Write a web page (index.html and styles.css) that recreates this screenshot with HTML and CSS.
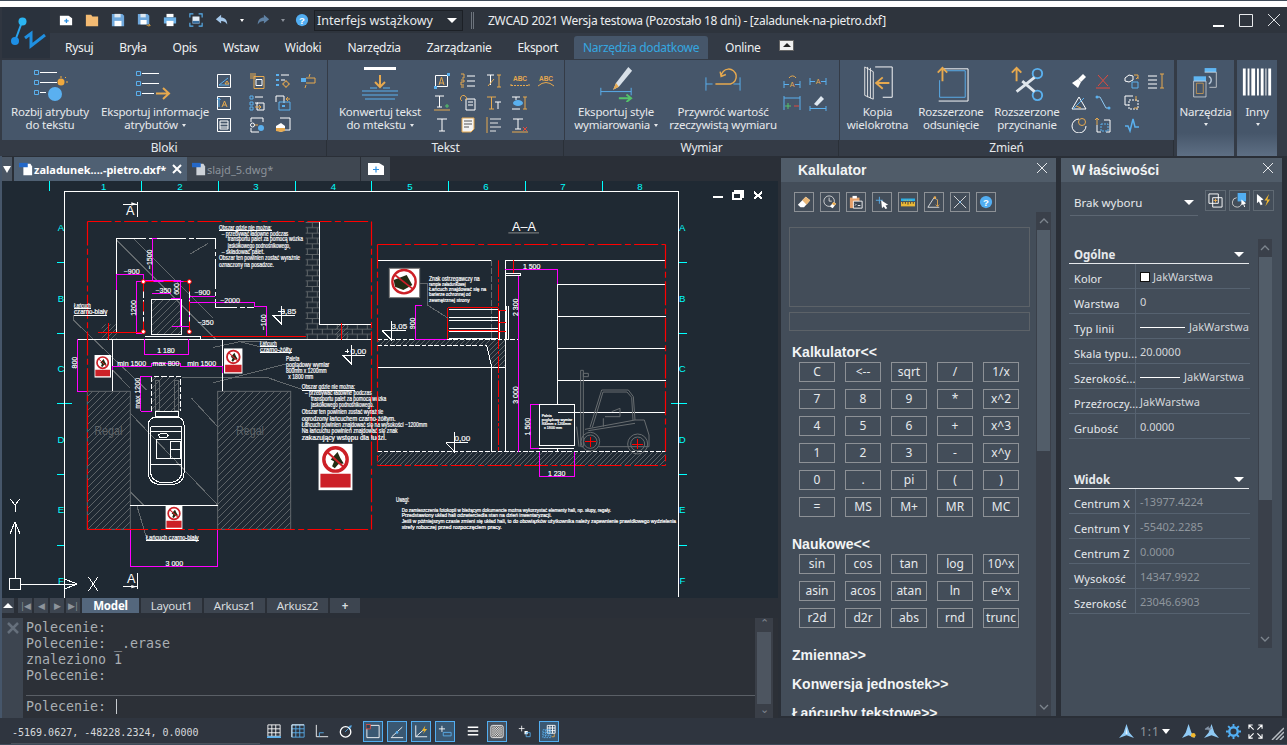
FILE: index.html
```html
<!DOCTYPE html>
<html lang="pl">
<head>
<meta charset="utf-8">
<title>ZWCAD 2021</title>
<link rel="stylesheet" href="styles.css">
</head>
<body>
<div class="app">
  <div class="strip"></div>
  <header class="head">
    <div class="logo">
      <svg width="48" height="50" viewBox="0 7 48 50"><path d="M20 22 13 41" stroke="#2aa5ee" stroke-width="2"/><circle cx="20.5" cy="21.5" r="4" fill="#2bb5f2"/><circle cx="13" cy="41" r="4" fill="#1d8fe6"/><path d="M23 38 29 33.500V46L43 35" fill="none" stroke="#1f8fe0" stroke-width="3"/></svg>
    </div>
    <div class="headmain">
      <div class="titlebar">
        <svg class="q" viewBox="0 0 16 16"><path d="M1 3h10l4 3v8H1z" fill="#fff"/><path d="M6 9h5M8.500 6.500v5" stroke="#2c8fe0" stroke-width="1.500"/></svg>
        <svg class="q" viewBox="0 0 16 16"><path d="M1 2h6l1.500 2H15v11H1z" fill="#f4bb73"/></svg>
        <svg class="q" viewBox="0 0 16 16"><path d="M1 1h12l2 2v12H1z" fill="#6fa8dc"/><path d="M4 1h7v4H4z" fill="#dfe8f0"/><path d="M4 9h8v6H4z" fill="#fff"/></svg>
        <svg class="q" viewBox="0 0 16 16"><path d="M1 1h11l2 2v10H1z" fill="#6fa8dc"/><path d="M4 1h6v4H4z" fill="#dfe8f0"/><path d="M4 8h7v5H4z" fill="#fff"/><path d="M11 14h4m-1.500-1.500 1.500 1.500-1.500 1.500" stroke="#eda93e" fill="none"/></svg>
        <svg class="q" viewBox="0 0 16 16"><path d="M4 1h8v4H4z" fill="#fff"/><path d="M1 5h14v7H1z" fill="#6fb3e8"/><path d="M4 9h8v6H4z" fill="#fff"/></svg>
        <svg class="q" viewBox="0 0 16 16"><path d="M1 5V1h4M11 1h4v4M15 11v4h-4M5 15H1v-4" fill="none" stroke="#59b0ee" stroke-width="1.300"/><path d="M4 4h8v8H4z" fill="#e5eef6"/><path d="M4 9h8v3H4z" fill="#3a6f9f"/></svg>
        <svg class="q" viewBox="0 0 16 16"><path d="M7 2 1 7l6 5V9c3 0 5 1 7 4 0-5-3-8-7-8z" fill="#a5c8ea"/></svg>
        <span class="tri small"></span>
        <svg class="q" viewBox="0 0 16 16"><path d="M9 2l6 5-6 5V9c-3 0-5 1-7 4 0-5 3-8 7-8z" fill="#5f81a3"/></svg>
        <span class="tri small dimtri"></span>
        <svg class="q" viewBox="0 0 16 16"><circle cx="8" cy="8" r="7" fill="#52aef2"/><text x="8" y="12" class="qm">?</text></svg>
        <div class="combo"><span>Interfejs wstążkowy</span><i class="tri"></i></div>
        <span class="sep"></span>
        <span class="title">ZWCAD 2021 Wersja testowa (Pozostało 18 dni) - [zaladunek-na-pietro.dxf]</span>
        <div class="win">
          <svg width="13" height="13" viewBox="0 0 13 13"><path d="M1 12h11" stroke="#fff" stroke-width="2"/></svg>
          <svg width="14" height="13" viewBox="0 0 14 13"><path d="M.5.500h13v12H.5z" fill="none" stroke="#e8eaec"/></svg>
          <svg width="14" height="14" viewBox="0 0 14 14"><path d="M1 1l12 12M13 1 1 13" stroke="#dfe2e5"/></svg>
        </div>
      </div>
      <nav class="menu">
        <a>Rysuj</a><a>Bryła</a><a>Opis</a><a>Wstaw</a><a>Widoki</a><a>Narzędzia</a><a>Zarządzanie</a><a>Eksport</a><a class="on">Narzędzia dodatkowe</a><a>Online</a>
        <button class="collapse"><i></i></button>
      </nav>
    </div>
  </header>

  <section class="ribbon">
    <div class="rpanel p1">
      <div class="rbody">
        <div class="big w1">
          <svg class="bi" width="50" height="36" viewBox="0 0 50 36"><g fill="none" stroke="#5ab0ee"><path d="M9.500 4.500h4v4h-4zM9.500 14.500h4v4h-4zM9.500 24.500h4v4h-4z"/></g><path d="M15 6.500h17M15 16.500h17M15 26.500h6" stroke="#fff"/><circle cx="30" cy="28" r="7" fill="#5ab0f0"/><circle cx="36" cy="16" r="3.500" fill="#f0a93e"/><path d="M36 10v2M41 16h2M40 12l1-1" stroke="#f0a93e"/></svg>
          <span>Rozbij atrybuty<br>do tekstu</span>
        </div>
        <div class="big w2">
          <svg class="bi" width="50" height="36" viewBox="0 0 50 36"><g fill="none" stroke="#5ab0ee"><path d="M6.500 5.500h4v4h-4zM6.500 15.500h4v4h-4zM6.500 25.500h4v4h-4z"/></g><path d="M12 7.500h17M12 17.500h17M12 27.500h12" stroke="#fff"/><path d="M26 27.500h12M33 22l6 5.500-6 5.500" fill="none" stroke="#e6a94f" stroke-width="2"/></svg>
          <span>Eksportuj informacje<br>atrybutów <b class="dd"></b></span>
        </div>
        <div class="smalls cb">
          <svg class="s" viewBox="0 0 16 16"><path d="M1.500 1.500h13v13h-13z" fill="none" stroke="#fff"/><path d="M3 12 12 5M3 12h10" stroke="#5ab0ee"/><path d="M9 11l2-3 2 3z" fill="none" stroke="#e6a94f"/></svg>
          <svg class="s" viewBox="0 0 16 16"><path d="M1 1h6M1 3h6M1 5h6" stroke="#e6a94f"/><path d="M5 3.500h10v12H5z" fill="none" stroke="#e6a94f"/><path d="M7 6.500h6v6H7z" fill="none" stroke="#fff"/></svg>
          <svg class="s" viewBox="0 0 16 16"><path d="M1 2h3M1 7h3M1 12h3" stroke="#5ab0ee" stroke-width="2"/><path d="M6 2h8M6 7h4" stroke="#fff"/><circle cx="11" cy="11" r="2.500" fill="none" stroke="#e6a94f"/><path d="M11 7v1M11 14v1M7 11h1M14 11h1" stroke="#e6a94f"/></svg>
          <svg class="s" viewBox="0 0 16 16"><path d="M1 5h5v4H1z" fill="#5ab0ee"/><path d="M6 5h9v5H6M10 1l-1 3M6 12l-1 3" fill="none" stroke="#e6a94f"/></svg>
          <svg class="s" viewBox="0 0 16 16"><path d="M1.500 1.500h13v13h-13z" fill="none" stroke="#fff"/><path d="M3 12V4M1.500 5 3 3l1.500 2" fill="none" stroke="#5ab0ee"/><path d="M6 12l2.500-6 2.500 6M7 10h3" fill="none" stroke="#e6a94f"/></svg>
          <svg class="s" viewBox="0 0 16 16"><path d="M1 1h3v3H1zM1 7h3v3H1zM1 12h3v3H1z" fill="none" stroke="#5ab0ee"/><path d="M6 2h8M6 8h3" stroke="#fff"/><path d="M8 8h7v7H8z" fill="none" stroke="#fff"/><path d="M6 12h6m-2-2 2 2-2 2" fill="none" stroke="#e6a94f"/></svg>
          <svg class="s" viewBox="0 0 16 16"><path d="M1 1h8v7" fill="none" stroke="#fff"/><path d="M1 1v6" stroke="#fff"/><path d="M4 7h11v8H4z" fill="none" stroke="#5ab0ee"/><path d="M15 4h-4m2-2-2 2 2 2" fill="none" stroke="#e6a94f"/><path d="M7 10h3v2H7z" fill="#5ab0ee"/></svg>
          <span class="s"></span>
          <svg class="s" viewBox="0 0 16 16"><path d="M1.500 1.500h13v13h-13z" fill="none" stroke="#fff"/><path d="M4 4h8v8H4zM4 7h8M4 10h8" fill="none" stroke="#fff"/></svg>
          <svg class="s" viewBox="0 0 16 16"><path d="M2 5V1h12v4M2 11v4h8" fill="none" stroke="#fff"/><circle cx="3.500" cy="8" r="2" fill="none" stroke="#fff"/><path d="M6 8h3" stroke="#e6a94f"/><circle cx="12" cy="11" r="3" fill="#5ab0ee"/></svg>
          <svg class="s" viewBox="0 0 16 16"><path d="M5 1h10v12H9" fill="none" stroke="#fff"/><path d="M1 9l5-3 4 3v4l-4 2-5-2z" fill="#fff"/><path d="M1 11h9v3l-4 1-5-1z" fill="#e6a94f"/></svg>
          <span class="s"></span>
        </div>
      </div>
      <div class="rlabel">Bloki</div>
    </div>
    <div class="rpanel p2">
      <div class="rbody">
        <div class="big w3">
          <svg class="bi" width="50" height="36" viewBox="0 0 50 36"><path d="M9 1h32v3H9z" fill="#fff"/><path d="M25 9v12M20 16l5 5 5-5" fill="none" stroke="#e6a94f" stroke-width="2"/><path d="M15 22h7M28 22h7M7 25h36M7 29h36M10 33h30" stroke="#5ab0ee"/></svg>
          <span>Konwertuj tekst<br>do mtekstu <b class="dd"></b></span>
        </div>
        <div class="smalls c5">
          <svg class="s" viewBox="0 0 16 16"><path d="M1.500 2.500h12v11h-12z" fill="none" stroke="#fff"/><path d="M5 12l2.500-8L10 12M5.500 10h4" fill="none" stroke="#e6a94f"/><path d="M13 0h3v3h-3zM0 13h3v3H0z" fill="#5ab0ee"/></svg>
          <svg class="s" viewBox="0 0 16 16"><path d="M1 1h3v4H2M1 7h3v2H1v3h3M1 14h3" fill="none" stroke="#e6a94f"/><path d="M7 3h8M7 8h8M7 13h8" stroke="#fff"/></svg>
          <svg class="s" viewBox="0 0 16 16"><path d="M1 2h7M4.500 2v10" stroke="#fff"/><path d="M2 13 8 6" stroke="#e6a94f"/><path d="M11 2h4M13 2v12M11 14h4" stroke="#e6a94f"/></svg>
          <svg class="s w" viewBox="0 0 20 16"><text x="10" y="8" class="abc">ABC</text><path d="M1 11v3M19 11v3M1 12.500h18" stroke="#e6a94f" stroke-dasharray="2 1"/></svg>
          <svg class="s w" viewBox="0 0 20 16"><text x="10" y="8" class="abc">ABC</text><path d="M2 13Q10 6 18 13" fill="none" stroke="#e6a94f"/></svg>
          <svg class="s" viewBox="0 0 16 16"><path d="M1 1h9M5.500 1v11M3 12h5" stroke="#fff"/><path d="M0 15h16" stroke="#e6a94f"/><path d="M11 11h4M13 9v4" stroke="#54c36a"/></svg>
          <svg class="s" viewBox="0 0 16 16"><path d="M6 4h9v11H6z" fill="none" stroke="#fff"/><path d="M8 7h5M8 10h5" stroke="#fff"/><path d="M6 5a3 3 0 1 0-4 1" fill="none" stroke="#e6a94f"/></svg>
          <svg class="s" viewBox="0 0 16 16"><path d="M1 2h9M5.500 2v12M3 14h5" stroke="#e6a94f"/><path d="M9 7h6M12 7v7" stroke="#fff"/></svg>
          <svg class="s" viewBox="0 0 16 16"><path d="M0 2h8M4 2v3M0 14h8" stroke="#fff"/><path d="M11 2h4M13 2v12M11 14h4" stroke="#e6a94f"/><ellipse cx="6" cy="8" rx="5" ry="3" fill="#5ab0ee"/></svg>
          <span class="s"></span>
          <svg class="s" viewBox="0 0 16 16"><path d="M3 2h10M8 2v12M5 14h6" stroke="#fff"/></svg>
          <svg class="s" viewBox="0 0 16 16"><path d="M2 1h12v11l-3 3H2z" fill="#f4f4f4" stroke="#e6a94f"/><path d="M4 4h8M4 7h8M4 10h5" stroke="#555"/></svg>
          <svg class="s" viewBox="0 0 16 16"><path d="M1 0v16" stroke="#e6a94f"/><path d="M4 2h11M4 6h8M4 10h11M4 14h6" stroke="#e8e8e8"/></svg>
          <svg class="s" viewBox="0 0 16 16"><path d="M0 15h16" stroke="#e6a94f"/><path d="M1 2h10M6 2v10M3 12h6" stroke="#fff"/><path d="M11 10l4 4M15 10l-4 4" stroke="#e24b3e"/></svg>
          <span class="s"></span>
        </div>
      </div>
      <div class="rlabel">Tekst</div>
    </div>
    <div class="rpanel p3">
      <div class="rbody">
        <div class="big w4">
          <svg class="bi" width="50" height="38" viewBox="0 0 50 38"><path d="M38 1 25 18l-3 7 6-3L42 5z" fill="#d8e0e8"/><path d="M22 25l6-3-3-4z" fill="#e6a94f"/><path d="M9 27h32M9 23v8M41 23v8" stroke="#5ab0ee" fill="none"/><path d="M28 34h12m-4-4 5 4-5 4" fill="none" stroke="#54c36a" stroke-width="2"/></svg>
          <span>Eksportuj style<br>wymiarowania <b class="dd"></b></span>
        </div>
        <div class="big w5">
          <svg class="bi" width="50" height="38" viewBox="0 0 50 38"><path d="M7 12v14M43 12v14M7 19h7M36 19h7" stroke="#5ab0ee" fill="none"/><path d="M17 19h16a8 8 0 1 0-10-8M22 6l1 5 5-2" fill="none" stroke="#e6a94f" stroke-width="1.500"/></svg>
          <span>Przywróć wartość<br>rzeczywistą wymiaru</span>
        </div>
        <div class="smalls c2">
          <svg class="s w" viewBox="0 0 20 16"><path d="M2 8v7M18 8v7M2 11.500h5M13 11.500h5" stroke="#5ab0ee"/><path d="M7 5a4 4 0 0 1 7 0" fill="none" stroke="#e6a94f"/><text x="10" y="14" class="mini">A</text></svg>
          <svg class="s w" viewBox="0 0 20 16"><path d="M2 5v7M18 5v7M2 8.500h5M13 8.500h5" stroke="#5ab0ee"/><text x="10" y="11" class="mini">A</text></svg>
          <svg class="s w" viewBox="0 0 20 16"><path d="M2 1v14M18 1v14M2 3h16" stroke="#5ab0ee"/><path d="M3 11h6M6 8v6" stroke="#54c36a"/><path d="M12 11h5" stroke="#e24b3e"/></svg>
          <svg class="s w" viewBox="0 0 20 16"><path d="M2 11v5M18 11v5M2 13.500h16" stroke="#5ab0ee"/><path d="M6 9l7-8 3 3-7 7z" fill="#dfe8f0"/></svg>
        </div>
      </div>
      <div class="rlabel">Wymiar</div>
    </div>
    <div class="rpanel p4">
      <div class="rbody">
        <div class="big w6">
          <svg class="bi" width="50" height="38" viewBox="0 0 50 38"><path d="M11 1v30l9 4V6zM14 1v32M17 2v32" fill="none" stroke="#e8e8e8"/><path d="M22 1h18v32H30" fill="none" stroke="#fff"/><path d="M37 18H24m6-6-7 6 7 6" fill="none" stroke="#e6a94f" stroke-width="2"/></svg>
          <span>Kopia<br>wielokrotna</span>
        </div>
        <div class="big w7">
          <svg class="bi" width="50" height="38" viewBox="0 0 50 38"><path d="M20 5h20v28H13V15" fill="none" stroke="#5ab0ee"/><path d="M16 3h27v34H12" fill="none" stroke="#fff"/><path d="M16 16V2m-5 5 5-5 5 5" fill="none" stroke="#e6a94f" stroke-width="2"/></svg>
          <span>Rozszerzone<br>odsunięcie</span>
        </div>
        <div class="big w8">
          <svg class="bi" width="50" height="38" viewBox="0 0 50 38"><circle cx="36" cy="8" r="5" fill="none" stroke="#5ab0ee" stroke-width="2"/><circle cx="36" cy="31" r="5" fill="none" stroke="#5ab0ee" stroke-width="2"/><path d="M33 12 14 27M33 27 20 16" stroke="#e0e6ec" stroke-width="3"/><path d="M14 16V2M9 7l5-5 5 5" fill="none" stroke="#e6a94f" stroke-width="2"/></svg>
          <span>Rozszerzone<br>przycinanie</span>
        </div>
        <div class="smalls z">
          <svg class="s" viewBox="0 0 16 16"><path d="M12 1l3 3-5 5-3-3z" fill="#fff"/><path d="M7 6l3 3-3 6-6-5z" fill="#fff"/></svg>
          <svg class="s" viewBox="0 0 16 16"><path d="M3 2l10 11M13 2 3 13M1 15h14" stroke="#e24b3e"/></svg>
          <svg class="s" viewBox="0 0 16 16"><path d="M1 5l4-3 4 1v4l-4 2-4-1z" fill="none" stroke="#fff"/><path d="M8 9h6v6H8z" fill="none" stroke="#5ab0ee"/><path d="M10 2h4v4m-2 0 2-2" fill="none" stroke="#e6a94f"/></svg>
          <svg class="s" viewBox="0 0 16 16"><path d="M0 3h9M0 7h9M0 11h9M0 15h9" stroke="#fff"/><path d="M12 1h4M14 1v14M12 15h4" stroke="#e6a94f"/></svg>
          <svg class="s" viewBox="0 0 16 16"><path d="M1 14h14L8 2z" fill="none" stroke="#fff"/><path d="M2 14l11-11" stroke="#5ab0ee"/><path d="M5 11l5 2" stroke="#e6a94f"/></svg>
          <svg class="s" viewBox="0 0 16 16"><path d="M2 2h3l6 11h4" fill="none" stroke="#8fc9f4"/><circle cx="2" cy="2" r="1.500" fill="#5ab0ee"/><circle cx="14" cy="13" r="1.500" fill="#5ab0ee"/></svg>
          <svg class="s" viewBox="0 0 16 16"><path d="M9 1H1v9h4" fill="none" stroke="#fff"/><path d="M5 5h9v9H5z" fill="none" stroke="#fff" stroke-dasharray="2 1"/><path d="M12 1v5M10 13h4" stroke="#e6a94f"/></svg>
          <span class="s"></span>
          <svg class="s" viewBox="0 0 16 16"><path d="M8 2a7 7 0 1 0 7 7" fill="none" stroke="#fff"/><circle cx="11" cy="5" r="3.500" fill="none" stroke="#e6a94f"/></svg>
          <svg class="s" viewBox="0 0 16 16"><path d="M2 8v7h4M11 15h4V3H9" fill="none" stroke="#fff"/><path d="M2 8V1M0 3l2-2 2 2" fill="none" stroke="#e6a94f"/><path d="M6 7h7v7H6z" fill="none" stroke="#5ab0ee" stroke-dasharray="2 1"/></svg>
          <svg class="s" viewBox="0 0 16 16"><path d="M1 9h3l2 5 3-12 2 8h4" fill="none" stroke="#5ab0ee" stroke-width="1.500"/></svg>
          <span class="s"></span>
        </div>
      </div>
      <div class="rlabel">Zmień</div>
    </div>
    <div class="rbtn nar">
      <svg class="ni" viewBox="0 0 46 48"><path d="M21 3h17v6H21z" fill="#5fb6f3"/><path d="M21 9h17v22H28" fill="none" stroke="#e8e8e8"/><path d="M27 15a6 6 0 0 1 0 11" fill="none" stroke="#b6c7d8" stroke-width="2"/><path d="M5 15h18v7H5z" fill="#5fb6f3"/><path d="M5 22h18v23H5z" fill="none" stroke="#e8e8e8"/><path d="M9 25h10v15H9z" fill="none" stroke="#e6a94f"/></svg>
      <span>Narzędzia</span><b class="dd"></b>
    </div>
    <div class="rbtn iny">
      <svg class="ii" viewBox="0 0 34 42" preserveAspectRatio="none"><path d="M2 2h3v38H2zM7 2h2v38H7zM11 2h4v38h-4zM17 2h2v38h-2zM21 2h3v38h-3zM26 2h1v38h-1zM29 2h3v38h-3z" fill="#fff"/></svg>
      <span>Inny</span><b class="dd"></b>
    </div>
  </section>

  <main class="work">
    <div class="left">
      <div class="doctabs">
        <span class="down"><i class="tri"></i></span>
        <div class="dtab act"><svg class="fi" viewBox="0 0 16 16"><path d="M5 2h8l2 3v10H5z" fill="#fff"/><path d="M0 1h10v5H0z" fill="#2468c8"/></svg><span>zaladunek....-pietro.dxf*</span><svg class="x" width="10" height="10" viewBox="0 0 10 10"><path d="M1 1l8 8M9 1 1 9" stroke="#fff" stroke-width="2"/></svg></div>
        <div class="dtab"><svg class="fi" viewBox="0 0 16 16"><path d="M5 2h8l2 3v10H5z" fill="#cdd2d8"/><path d="M0 1h10v5H0z" fill="#2468c8"/></svg><span>slajd_5.dwg*</span></div>
        <div class="newtab"><svg width="16" height="12" viewBox="0 0 16 12"><path d="M0 0h11l5 3v9H0z" fill="#fff"/><path d="M5 6.500h6M8 3.500v6" stroke="#2c8fe0" stroke-width="1.200"/></svg></div>
      </div>
      <div class="canvas">
        <svg class="draw" width="776" height="417" viewBox="6 -27 2328 1251">
          <defs>
            <pattern id="h" width="21" height="21" patternUnits="userSpaceOnUse"><path d="M-3 24 24-3M-3 3 3-3M18 24l6-6" stroke="#5d6367" stroke-width="3"/></pattern>
            <pattern id="hd" width="15" height="15" patternUnits="userSpaceOnUse"><path d="M-3 18 18-3M-3 3 3-3M12 18l6-6" stroke="#5d6367" stroke-width="3"/></pattern>
            <pattern id="br" width="30" height="32" patternUnits="userSpaceOnUse"><path d="M0 1.500h30M0 17h30M7 0v16M22 16v16" stroke="#5d6367" stroke-width="3" fill="none"/></pattern>
            <symbol id="sign" viewBox="0 0 50 68"><path d="M0 0h50v68H0z" fill="#fff"/><circle cx="25" cy="23" r="17" fill="#fff" stroke="#cc2027" stroke-width="5"/><path d="M28 12l4 9 5 8-8 1-5 6-4-3 3-7-5-3z" fill="#222d14"/><path d="M13 12l25 23" stroke="#cc2027" stroke-width="3"/><path d="M3 44h44v20H3z" fill="#cc2027"/></symbol>
          </defs>

          <g class="cy">
            <path d="M147-27V3M423-27V3M654-27V3M885-27V3M1113-27V3M1345-27V3M1575-27V3M1807-27V3"/>
            <path d="M172 217h21M172 430h21M172 640h45M172 853h21M172 1066h21M2035 217h25M2035 430h25M2013 640h47M2035 853h25M2035 1066h25"/>
          </g>
          <g class="cyt">
            <text x="311" y="-1">1</text><text x="540" y="-1">2</text><text x="768" y="-1">3</text><text x="1000" y="-1">4</text><text x="1230" y="-1">5</text><text x="1458" y="-1">6</text><text x="1689" y="-1">7</text><text x="1920" y="-1">8</text>
            <text x="183" y="123">A</text><text x="183" y="335">B</text><text x="183" y="547">C</text><text x="183" y="759">D</text><text x="183" y="970">E</text><text x="183" y="1183">F</text>
            <text x="2047" y="123">A</text><text x="2047" y="335">B</text><text x="2047" y="547">C</text><text x="2047" y="759">D</text><text x="2047" y="970">E</text><text x="2047" y="1183">F</text>
          </g>
          <path class="wl" d="M193 1224V5H2035V1222"/>
          <path class="wl w2p" d="M2139 22h30"/>
          <path class="wl w2p" d="M2200 10h22v18h-22zM2206 10V4h22v18h-6"/>
          <path class="wl w2p" d="M2262 6l24 20M2286 6l-24 20"/>

          <!-- left plan -->
          <rect x="262" y="604" width="129" height="414" fill="url(#h)" stroke="#62686c" stroke-width="3"/>
          <rect x="653" y="604" width="219" height="414" fill="url(#h)" stroke="#62686c" stroke-width="3"/>
          <rect x="455" y="328" width="88" height="105" fill="url(#h)"/>
          <rect x="455" y="560" width="88" height="103" fill="url(#h)"/>
          <rect x="917" y="95" width="41" height="308" fill="url(#br)"/>
          <rect x="917" y="403" width="198" height="44" fill="url(#br)"/>
          <rect x="305" y="403" width="45" height="44" fill="url(#hd)"/>
          <rect x="1005" y="403" width="40" height="44" fill="url(#hd)"/>
          <path class="gy" d="M350 150 650 450M400 145 640 385M570 192 625 160M575 625 653 710M391 670 653 945M391 905 430 945M338 540 391 595M220 375V390L440 600M410 945l30 100M720 455h80M780 470 720 455 640 472M858 522 640 578M545 562H800L905 598"/>
          <path class="wl" d="M958 95V403H1115M917 447H233M668 447H1115M338 448V604M667 448V604M391 945H653M349 145V430"/>
          <path class="wl" d="M349 145H647V352H762" stroke-dasharray="90 8 14 8"/>
          <path class="wl" d="M455 433V328H543V433ZM435 440H600V447H435"/>
          <path class="wl" d="M455 663V560H542V663" stroke-dasharray="16 6"/>
          <path class="gy" d="M465 570h14v90h-14zM522 570h14v90h-14z"/>
          <path class="wl" d="M445 705Q445 682 470 682H528Q552 682 552 705V850Q552 885 498 885Q445 885 445 850ZM452 710V845Q452 878 498 878Q545 878 545 845V710M452 710H545M452 725H545M452 822H545M465 665H535V680H465ZM470 748H545V805H470ZM510 755H540V805H510ZM510 778H540"/>
          <path class="wl" d="M475 735c8-8 22-8 30 0l-6 8H480Z"/>
          <path class="mg" d="M349 300V253H430V275M408 275H568M408 275V430H430M458 272V145H472M430 270H540V325H512M455 310H512M570 318H645M570 338H763V350H800V440H763M433 447V492H565V447M233 448V604H262M338 540V530H455V520H542V530H667V550M422 663V560H455M422 663H455M516 408H568M391 1018V1130H653V1018M568 275V430M540 325V408"/>
          <path class="rd" d="M295 427.500H430M605 439.500H917M325 400V450M1025 400V450"/>
          <path class="wl" d="M430 278V425M568 278V430" stroke-dasharray="20 6"/>
          <path class="rdd" d="M430.500 274.500H568.500" stroke-dasharray="30 30"/>
          <path class="rdd" d="M430.500 274.500V424.500" stroke-dasharray="30 30"/>
          <path class="rdd" d="M568.500 274.500V424.500" stroke-dasharray="30 30"/>
          <!-- red outline of the plan, one stroke per side -->
          <path class="rdd fr" d="M262.500 94.500H1114.500"/>
          <path class="rdd fr" d="M262.500 94.500V1018.500"/>
          <path class="rdd fr" d="M1114.500 94.500V1018.500"/>
          <path class="rdd fr" d="M262.500 1018.500H1114.500"/>
          <g class="gr"><circle cx="430" cy="275" r="6"/><circle cx="568" cy="275" r="6"/><circle cx="430" cy="425" r="6"/><circle cx="568" cy="425" r="6"/></g>
          <path class="wl" d="M370 42h40M412 35V82M370 1190h40M412 1150V1198"/>
          <path class="wf" d="M410 42l-16-5v10zM410 1190l-16-5v10z"/>
          <path class="wl" d="M222 356h50M222 376h100M780 470h50M780 488h95M657 122h158M905 600h160M438 1052h158"/>

          <use href="#sign" x="283" y="495" width="50" height="68"/>
          <use href="#sign" x="672" y="475" width="56" height="76"/>
          <use href="#sign" x="496" y="947" width="52" height="70"/>
          <use href="#sign" x="955" y="760" width="103" height="142"/>

          <text class="rg" x="283" y="735" textLength="84" lengthAdjust="spacingAndGlyphs">Regał</text>
          <text class="rg" x="708" y="735" textLength="84" lengthAdjust="spacingAndGlyphs">Regał</text>
          <text class="big1" x="391" y="76">A</text>
          <text class="big1" x="394" y="1180">A</text>
          <g class="tw">
            <text x="657" y="119" textLength="158" lengthAdjust="spacingAndGlyphs">Obszar gdzie nie można:</text>
            <text x="665" y="137" textLength="200" lengthAdjust="spacingAndGlyphs">– przebywać ładowne podczas</text>
            <text x="683" y="154" textLength="226" lengthAdjust="spacingAndGlyphs">transportu palet za pomocą wózka</text>
            <text x="683" y="173" textLength="188" lengthAdjust="spacingAndGlyphs">jaskółkowego podnośnikowego,</text>
            <text x="665" y="191" textLength="128" lengthAdjust="spacingAndGlyphs">– składować palet.</text>
            <text x="657" y="211" textLength="243" lengthAdjust="spacingAndGlyphs">Obszar ten powinien zostać wyraźnie</text>
            <text x="657" y="230" textLength="165" lengthAdjust="spacingAndGlyphs">oznaczony na posadzce.</text>
            <text x="222" y="353" textLength="50" lengthAdjust="spacingAndGlyphs">Łańcuch</text>
            <text x="222" y="373" textLength="100" lengthAdjust="spacingAndGlyphs">czarno-biały</text>
            <text x="780" y="467" textLength="50" lengthAdjust="spacingAndGlyphs">Łańcuch</text>
            <text x="780" y="485" textLength="95" lengthAdjust="spacingAndGlyphs">czarno-żółty</text>
            <text x="858" y="512" textLength="40" lengthAdjust="spacingAndGlyphs">Paleta</text>
            <text x="858" y="530" textLength="130" lengthAdjust="spacingAndGlyphs">poglądowy wymiar</text>
            <text x="858" y="548" textLength="122" lengthAdjust="spacingAndGlyphs">800mm x 1200mm</text>
            <text x="865" y="566" textLength="75" lengthAdjust="spacingAndGlyphs">x 1800 mm</text>
            <text x="905" y="597" textLength="160" lengthAdjust="spacingAndGlyphs">Obszar gdzie nie można:</text>
            <text x="915" y="615" textLength="200" lengthAdjust="spacingAndGlyphs">– przebywać ładowne podczas</text>
            <text x="933" y="633" textLength="226" lengthAdjust="spacingAndGlyphs">transportu palet za pomocą wózka</text>
            <text x="933" y="651" textLength="188" lengthAdjust="spacingAndGlyphs">jaskółkowego podnośnikowego.</text>
            <text x="905" y="671" textLength="245" lengthAdjust="spacingAndGlyphs">Obszar ten powinien zostać wyraźnie</text>
            <text x="905" y="692" textLength="282" lengthAdjust="spacingAndGlyphs">ogrodzony łańcuchem czarno-żółtym.</text>
            <text x="905" y="711" textLength="376" lengthAdjust="spacingAndGlyphs">Łańcuch powinien znajdować się na wysokości ~1200mm</text>
            <text x="905" y="730" textLength="288" lengthAdjust="spacingAndGlyphs">Na łańcuchu powinien znajdować się znak</text>
            <text x="905" y="749" textLength="255" lengthAdjust="spacingAndGlyphs">zakazujący wstępu dla ludzi.</text>
            <text x="438" y="1049" textLength="158" lengthAdjust="spacingAndGlyphs">Łańcuch czarno-biały</text>
          </g>
          <g class="dm">
            <text x="395" y="251">~900</text><text x="490" y="308">~350</text><text x="607" y="315">~900</text><text x="690" y="338">~2000</text><text x="617" y="406">~350</text><text x="498" y="490">1 180</text><text x="395" y="528">min 1500</text><text x="498" y="528">max 800</text><text x="605" y="528">min 1500</text><text x="523" y="1128">3 000</text>
            <text transform="translate(457 208) rotate(-90)">~1500</text><text transform="translate(536 297) rotate(-90)">600</text><text transform="translate(407 354) rotate(-90)">1200</text><text transform="translate(797 397) rotate(-90)">~100</text><text transform="translate(232 518) rotate(-90)">800</text><text transform="translate(420 610) rotate(-90)">max 1200</text>
            <text x="865" y="372" class="lv">3,85</text><text x="1075" y="493" class="lv">0,00</text>
          </g>
          <path class="wl" d="M818 376H886M818 376 845 403V347M835 364H855M845 355V373M1028 495H1096M1028 495 1055 522V466M1035 484H1047M1041 478V490"/>

          <!-- UCS -->
          <path class="wl" d="M45 1000V1166M30 1032 45 995 60 1032M45 995V1032M29 1166H61V1198H29ZM61 1182H232M193 1167 232 1182 193 1197ZM32 928 45 946 58 928M45 946V965M266 1162 293 1202M293 1162 266 1202"/>

          <!-- section -->
          <g transform="translate(1125 0)">
            <rect x="8" y="450" width="327" height="16" fill="url(#hd)"/>
            <path fill="url(#hd)" d="M335 466 350 530H391V450H335Z"/>
            <rect x="8" y="787" width="864" height="39" fill="url(#hd)"/>
            <path class="wl" d="M7 211H350M390 211H872M548 283H872M548 379H872M548 475H872M548 571H872M548 667H872M548 283V645M350 530V785M391 211V785M7 532H391"/>
            <path class="gy" stroke-dasharray="18 6" d="M350 211V450"/>
            <path class="rdd" stroke-dasharray="50 6 10 6" d="M370.500 211V785"/>
            <path class="wl" stroke-dasharray="14 5" d="M7 448H432M7 466H335M7 785H872"/>
            <path class="rdd fr" d="M7.500 163.500H871.500"/>
            <path class="rdd fr" d="M7.500 163.500V826.500"/>
            <path class="rdd fr" d="M871.500 163.500V826.500"/>
            <path class="rdd fr" d="M7.500 826.500H871.500"/>
            <path class="wl" d="M335 466 350 530M391 250H437V257H391"/>
            <path class="mg" d="M391 238H548V283M430 257V785M140 347H122V448H218M493 785V860H598V785M493 643H467V775H493"/>
            <path class="rd" d="M415 211V250"/>
            <path class="wl" d="M493 643H598V765H493ZM493 775H598M547 775V785M218 353V450M222 358H370M222 382H370M222 392H370M222 415H370M222 425H370M222 445H370M395 347V448M400 347V448M372 362V448M392 362V448"/>
            <path class="rd" d="M220 353H368M220 422H368M372 362H392M372 398H392M372 425H392M370 353V448M218 353V448"/>
            <path class="gy" d="M133 280H157V345L220 385"/>
            <path class="wl" d="M22 420H92M22 422 48 448V392M212 758H280M212 758 238 785V727"/>
            <rect x="400" y="126" width="92" height="5" fill="#5d6367"/>
            <text class="big1" x="447" y="122">A–A</text>

            <rect x="43" y="235" width="91" height="88" fill="#fff" stroke="#777" stroke-width="3"/>
            <circle cx="87" cy="275" r="35" fill="#fff" stroke="#cc2027" stroke-width="7"/>
            <path d="M56 270 95 255 112 285 85 300 60 290Z" fill="#222d14"/>
            <path d="M60 255 115 298" stroke="#cc2027" stroke-width="5"/>

            <g class="fl">
              <path d="M617 541H625V770H617ZM625 550H640V560H625ZM605 710 612 770"/>
              <path d="M645 712 680 600H760L775 620 780 690M652 712 684 606H756L770 622 774 690"/>
              <path d="M630 718 780 690H808L822 735V770H670M640 722 780 700"/>
              <path d="M690 680H735M685 685V710M710 665 735 655V680"/>
              <circle cx="646" cy="755" r="28"/><circle cx="646" cy="755" r="20"/><circle cx="788" cy="762" r="30"/><circle cx="788" cy="762" r="21"/>
            </g>
            <path class="rd" d="M630 755h32M646 740v32M772 762h32M788 746v32"/>

            <g class="dm">
              <text x="470" y="236">1 500</text><text x="545" y="858">1 230</text>
              <text transform="translate(429 352) rotate(-90)">2 300</text><text transform="translate(429 615) rotate(-90)">3 000</text><text transform="translate(465 710) rotate(-90)">1 500</text><text transform="translate(120 400) rotate(-90)">900</text>
              <text x="73" y="416" class="lv">3,05</text><text x="262" y="752" class="lv">0,00</text>
            </g>
            <g class="tw">
              <text x="162" y="274" textLength="152" lengthAdjust="spacingAndGlyphs">Znak ostrzegawczy na</text>
              <text x="162" y="289" textLength="110" lengthAdjust="spacingAndGlyphs" class="sm">rampie załadunkowej</text>
              <text x="162" y="304" textLength="172" lengthAdjust="spacingAndGlyphs" class="sm">Łańcuch znajdować się na</text>
              <text x="162" y="319" textLength="125" lengthAdjust="spacingAndGlyphs" class="sm">barierze ochronnej od</text>
              <text x="162" y="335" textLength="122" lengthAdjust="spacingAndGlyphs" class="sm">zewnętrznej strony</text>
              <text x="63" y="936" textLength="40" lengthAdjust="spacingAndGlyphs">Uwagi:</text>
              <text x="80" y="965" textLength="628" lengthAdjust="spacingAndGlyphs" class="nt">Do zamieszczenia fotokopii w bieżącym dokumencie można wykorzystać elementy hali, np. słupy, regały.</text>
              <text x="80" y="982" textLength="450" lengthAdjust="spacingAndGlyphs" class="nt">Przedstawiony układ hali odzwierciedla stan na dzień inwentaryzacji.</text>
              <text x="80" y="999" textLength="823" lengthAdjust="spacingAndGlyphs" class="nt">Jeśli w późniejszym czasie zmieni się układ hali, to do obowiązków użytkownika należy zapewnienie prawidłowego wydzielenia</text>
              <text x="80" y="1016" textLength="300" lengthAdjust="spacingAndGlyphs" class="nt">strefy roboczej przed rozpoczęciem pracy.</text>
              <text x="500" y="682" textLength="30" lengthAdjust="spacingAndGlyphs" class="tiny">Paleta</text>
              <text x="500" y="694" textLength="92" lengthAdjust="spacingAndGlyphs" class="tiny">poglądowy wymiar</text>
              <text x="500" y="706" textLength="88" lengthAdjust="spacingAndGlyphs" class="tiny">800mm x 1200mm</text>
              <text x="507" y="718" textLength="54" lengthAdjust="spacingAndGlyphs" class="tiny">x 1800 mm</text>
            </g>
          </g>
        </svg>
      </div>
      <div class="layouts">
        <span class="lb up"><i class="tri rev"></i></span>
        <span class="lb nv">|◀</span><span class="lb nv">◀</span><span class="lb nv">▶</span><span class="lb nv">▶|</span>
        <a class="lt model">Model</a><a class="lt">Layout1</a><a class="lt">Arkusz1</a><a class="lt">Arkusz2</a><a class="lt plus">+</a>
      </div>
      <div class="cmd">
        <div class="grip"><svg width="12" height="12" viewBox="0 0 12 12"><path d="M1 1l10 10M11 1 1 11" stroke="#66707c" stroke-width="2.500"/></svg></div>
        <div class="cmdmain">
          <pre class="hist">Polecenie:
Polecenie: _.erase
znaleziono 1
Polecenie:</pre>
          <div class="prompt">Polecenie: <i class="caret"></i></div>
        </div>
        <div class="cscroll"><span class="cv">⌃</span><span class="cthumb"></span><span class="cv">⌄</span></div>
      </div>
    </div>

    <aside class="panel calc">
      <div class="ptitle"><strong>Kalkulator</strong><svg width="12" height="12" viewBox="0 0 12 12"><path d="M1 1l10 10M11 1 1 11" stroke="#e6e9ec"/></svg></div>
      <div class="cbody">
        <div class="ccontent">
          <div class="tools">
            <button><svg viewBox="0 0 16 16"><path d="M10 2l5 4-7 8H4L1 11z" fill="#fff"/><path d="M10 2l5 4-4 5-5-5z" fill="#e9b778"/></svg></button>
            <button><svg viewBox="0 0 16 16"><circle cx="7" cy="7" r="6" fill="none" stroke="#ddd"/><path d="M7 3v4h3" fill="none" stroke="#ddd"/><path d="M12 8l3 2-4 5-3-2z" fill="#fff"/><path d="M12 8l3 2-2 2-3-2z" fill="#e6a94f"/></svg></button>
            <button><svg viewBox="0 0 16 16"><path d="M1 3h11v12H1z" fill="#e6a06a"/><path d="M4 1h5v3H4z" fill="#fff"/><path d="M5 7h10v8H5z" fill="#3c4652" stroke="#fff"/><path d="M7 10l1 1-1 1M10 12h3" stroke="#fff" fill="none"/></svg></button>
            <button><svg viewBox="0 0 16 16"><path d="M1 6h8M5 2v8" stroke="#5ab0ee"/><path d="M7 6l8 5-3 1 2 3-2 1-2-3-2 2z" fill="#fff"/></svg></button>
            <button><svg viewBox="0 0 16 16"><path d="M0 4h16v3H0z" fill="#28aee8"/><path d="M3 6h10" stroke="#e6c13c" stroke-dasharray="1 1"/><path d="M0 8h16v5H0z" fill="#eab836"/><path d="M2 8v2M5 8v2M8 8v3M11 8v2M14 8v2" stroke="#333"/></svg></button>
            <button><svg viewBox="0 0 16 16"><path d="M1 14h13M1 14 8 3l3 2" fill="none" stroke="#e8e8e8"/><circle cx="9" cy="3" r="1.500" fill="#e6a94f"/><path d="M12 5v8m-2-2 2 2 2-2" fill="none" stroke="#e6a94f"/></svg></button>
            <button><svg viewBox="0 0 16 16"><path d="M1 1l14 14M15 1 1 15" stroke="#e8e8e8"/><circle cx="8" cy="8" r="1" fill="#5ab0ee"/></svg></button>
            <button><svg viewBox="0 0 16 16"><circle cx="8" cy="8" r="7" fill="#52aef2"/><text x="8" y="12" class="qm">?</text></svg></button>
          </div>
          <div class="area"></div>
          <div class="inp"></div>
          <h3>Kalkulator&lt;&lt;</h3>
          <div class="keys">
            <button>C</button><button>&lt;--</button><button>sqrt</button><button>/</button><button>1/x</button>
            <button>7</button><button>8</button><button>9</button><button>*</button><button>x^2</button>
            <button>4</button><button>5</button><button>6</button><button>+</button><button>x^3</button>
            <button>1</button><button>2</button><button>3</button><button>-</button><button>x^y</button>
            <button>0</button><button>.</button><button>pi</button><button>(</button><button>)</button>
            <button>=</button><button>MS</button><button>M+</button><button>MR</button><button>MC</button>
          </div>
          <h3 class="gap">Naukowe&lt;&lt;</h3>
          <div class="keys">
            <button>sin</button><button>cos</button><button>tan</button><button>log</button><button>10^x</button>
            <button>asin</button><button>acos</button><button>atan</button><button>ln</button><button>e^x</button>
            <button>r2d</button><button>d2r</button><button>abs</button><button>rnd</button><button>trunc</button>
          </div>
          <h3 class="gap">Zmienna&gt;&gt;</h3>
          <h3 class="gap2">Konwersja jednostek&gt;&gt;</h3>
          <h3 class="gap2">Łańcuchy tekstowe&gt;&gt;</h3>
        </div>
        <div class="vscroll cs"><span class="ar"><svg width="10" height="6" viewBox="0 0 10 6"><path d="M1 5l4-4 4 4" fill="none" stroke="#7d858e" stroke-width="1.300"/></svg></span><span class="thumb"></span><span class="fill"></span><span class="ar dn"><svg width="10" height="6" viewBox="0 0 10 6"><path d="M1 1l4 4 4-4" fill="none" stroke="#7d858e" stroke-width="1.300"/></svg></span></div>
      </div>
    </aside>

    <aside class="panel props">
      <div class="ptitle"><strong>W łaściwości</strong><svg width="12" height="12" viewBox="0 0 12 12"><path d="M1 1l10 10M11 1 1 11" stroke="#e6e9ec"/></svg></div>
      <div class="ptop">
        <div class="sel"><span>Brak wyboru</span><i class="tri"></i></div>
        <button><svg viewBox="0 0 16 16"><path d="M1 1h10v10H1z" fill="none" stroke="#fff"/><path d="M5 5h10v10H5z" fill="none" stroke="#fff"/><path d="M6 8h4M8 6v4" stroke="#e6a94f"/></svg></button>
        <button><svg viewBox="0 0 16 16"><path d="M6 0h9v9H6z" fill="#52aef2"/><path d="M5 5a5 5 0 1 0 5 7" fill="none" stroke="#ccc"/><path d="M10 7l5 4-2 1 1 3-1 0-1-3-2 1z" fill="#fff"/></svg></button>
        <button><svg viewBox="0 0 16 16"><path d="M1 1l7 6-3 1 2 4-2 1-2-4-2 2z" fill="#fff"/><path d="M14 1 9 8h3l-2 6 5-7h-3z" fill="#f2b82e"/></svg></button>
      </div>
      <div class="pbody">
        <div class="pcontent">
          <div class="ghead"><span>Ogólne</span><i class="tri"></i></div>
          <div class="row"><span>Kolor</span><em><i class="swatch"></i>JakWarstwa</em></div>
          <div class="row"><span>Warstwa</span><em>0</em></div>
          <div class="row"><span>Typ linii</span><em><i class="ln l1"></i>JakWarstwa</em></div>
          <div class="row"><span>Skala typu...</span><em>20.0000</em></div>
          <div class="row"><span>Szerokość...</span><em><i class="ln l2"></i>JakWarstwa</em></div>
          <div class="row"><span>Przeźroczy...</span><em>JakWarstwa</em></div>
          <div class="row"><span>Grubość</span><em>0.0000</em></div>
          <div class="ghead second"><span>Widok</span><i class="tri"></i></div>
          <div class="row ro"><span>Centrum X</span><em>-13977.4224</em></div>
          <div class="row ro"><span>Centrum Y</span><em>-55402.2285</em></div>
          <div class="row ro"><span>Centrum Z</span><em>0.0000</em></div>
          <div class="row ro"><span>Wysokość</span><em>14347.9922</em></div>
          <div class="row ro"><span>Szerokość</span><em>23046.6903</em></div>
        </div>
        <div class="vscroll ps"><span class="ar"><svg width="10" height="6" viewBox="0 0 10 6"><path d="M1 5l4-4 4 4" fill="none" stroke="#7d858e" stroke-width="1.300"/></svg></span><span class="thumb"></span><span class="fill"></span><span class="ar dn"><svg width="10" height="6" viewBox="0 0 10 6"><path d="M1 1l4 4 4-4" fill="none" stroke="#7d858e" stroke-width="1.300"/></svg></span></div>
      </div>
    </aside>
  </main>

  <footer class="status">
    <div class="coords">-5169.0627, -48228.2324, 0.0000</div>
    <div class="sicons">
      <svg class="st" viewBox="0 0 16 16"><path d="M1 1h14v13H1zM1 5.500h14M1 10h14M5.500 1v13M10 1v13" fill="none" stroke="#fff"/><path d="M0 15h16" stroke="#5ab0ee" stroke-width="2"/></svg>
      <svg class="st" viewBox="0 0 16 16"><path d="M1 1h14v14H1zM1 5.500h14M1 10h14M5.500 1v14M10 1v14" fill="none" stroke="#5ab0ee"/><path d="M1 1h14M1 1v14" stroke="#fff"/></svg>
      <svg class="st" viewBox="0 0 16 16"><path d="M1.500 1v13.500H15" fill="none" stroke="#fff"/><path d="M5 14.500V10h5" fill="none" stroke="#5ab0ee"/></svg>
      <svg class="st" viewBox="0 0 16 16"><circle cx="7.500" cy="9" r="6" fill="none" stroke="#fff" stroke-width="1.500"/><path d="M7 9l7-7M11 3l3-1-1 3" stroke="#5ab0ee" fill="none"/></svg>
      <span class="box"><svg viewBox="0 0 16 16"><path d="M1 1h14v14H1z" fill="none" stroke="#fff"/><path d="M0 0h5v5H0z" fill="#2d4257" stroke="#e05040"/></svg></span>
      <span class="box"><svg viewBox="0 0 16 16"><path d="M1 15h14M2 14 14 3" stroke="#fff"/><circle cx="8" cy="9" r="1.500" fill="#5ab0ee"/></svg></span>
      <span class="box"><svg viewBox="0 0 16 16"><path d="M2 1v13h13M2 14l9-8" fill="none" stroke="#fff"/><path d="M13 1 9 7h3l-2 4 5-6h-3z" fill="#f2b82e"/></svg></span>
      <span class="box"><svg viewBox="0 0 16 16"><path d="M1 5h7M4.500 1.500v7" stroke="#fff"/><path d="M6 9h9v4H6z" fill="none" stroke="#5ab0ee"/></svg></span>
      <svg class="st lw" viewBox="0 0 16 16"><path d="M1 3h14M1 8h14M1 13h14" stroke="#fff" stroke-width="2"/></svg>
      <span class="box dark"><svg viewBox="0 0 16 16"><defs><pattern id="chk" width="2" height="2" patternUnits="userSpaceOnUse"><path d="M0 0h1v1H0zM1 1h1v1H1z" fill="#fff"/></pattern></defs><rect x="1" y="1" width="14" height="14" rx="2" fill="#444" stroke="#fff"/><rect x="2" y="2" width="12" height="12" fill="url(#chk)"/></svg></span>
      <svg class="st sm" viewBox="0 0 16 16"><path d="M1 5h7M4.500 1.500v7" stroke="#fff"/><path d="M8 8h4v4H8z" fill="#fff"/><path d="M10 10h5v5h-5z" fill="none" stroke="#5ab0ee"/></svg>
      <span class="box"><svg viewBox="0 0 16 16"><path d="M6 1h9v9H6zM6 4h9M6 7h9M9 1v9M12 1v9" fill="none" stroke="#fff"/><path d="M1 6h9v9H1zM1 9h9M1 12h9M4 6v9M7 6v9" fill="none" stroke="#5ab0ee" stroke-dasharray="2 1"/><path d="M14 11v3h-3" fill="none" stroke="#e6a94f"/></svg></span>
    </div>
    <div class="sright">
      <svg class="an" viewBox="0 0 16 16"><path d="M8 0 11 9l5 6-8-3-8 3 5-6z" fill="#8fc9f4"/><path d="M8 4 9 10l-1 1-1-1z" fill="#e8f3fb"/></svg>
      <span class="scale">1:1</span><i class="tri"></i>
      <svg class="an a2" viewBox="0 0 16 16"><path d="M7 0 10 9l4 6-7-3-7 3 4-6z" fill="#8fc9f4"/><circle cx="12" cy="12" r="2.500" fill="#f2b82e"/></svg>
      <svg class="an a3" viewBox="0 0 16 16"><path d="M8 0 11 9l5 6-8-3-8 3 5-6z" fill="#8fc9f4"/><path d="M1 5l4-3v2h4L5 8V6H1z" fill="#8393a6"/></svg>
      <svg class="an a4" viewBox="0 0 16 16"><circle cx="8" cy="8" r="4.500" fill="none" stroke="#52aef2" stroke-width="2.500"/><path d="M8 0v3M8 13v3M0 8h3M13 8h3M2.300 2.300l2 2M11.700 11.700l2 2M2.300 13.700l2-2M11.700 4.300l2-2" stroke="#52aef2" stroke-width="2"/></svg>
      <svg class="an a5" viewBox="0 0 16 16"><path d="M1 5V1h4M11 1h4v4M15 11v4h-4M5 15H1v-4M1 1l5 5M15 1l-5 5M15 15l-5-5M1 15l5-5" fill="none" stroke="#fff" stroke-width="1.200"/></svg>
      <svg class="rz" width="13" height="13" viewBox="0 0 13 13"><path d="M13 1 1 13M13 5 5 13M13 9l-4 4" stroke="#b8bdc3" stroke-width="1.500"/></svg>
    </div>
  </footer>
</div>
</body>
</html>
```

FILE: styles.css
```css
* { box-sizing: border-box; }
html, body { margin: 0; height: 100%; overflow: hidden; background: #2f353f; }
body { font-family: "Noto Sans", sans-serif; font-size: 11px; color: #e6e9ec; }
.app { width: 1287px; height: 745px; display: flex; flex-direction: column; overflow: hidden; }
i { display: inline-block; font-style: normal; }

.strip { height: 7px; background: #fff; border-top: 1px solid #3f4b59; flex: none; }

.head { height: 53px; flex: none; display: flex; padding-left: 2px; background: #303640; }
.logo { width: 48px; height: 51px; background: #2a323d; flex: none; }
.headmain { flex: 1; min-width: 0; display: flex; flex-direction: column; }
.titlebar { height: 26px; display: flex; align-items: center; background: #2e343d; padding-left: 9px; }
.q { width: 14px; height: 14px; margin-right: 12px; flex: none; }
.qm { font: bold 11px "Liberation Sans", sans-serif; fill: #fff; text-anchor: middle; }
.tri { width: 0; height: 0; border-left: 5px solid transparent; border-right: 5px solid transparent; border-top: 5px solid #fff; }
.tri.small { border-left-width: 2.500px; border-right-width: 2.500px; border-top-width: 3px; margin: 0 12px 0 -1px; }
.tri.dimtri { border-top-color: #8b919a; margin-right: 10px; }
.tri.rev { border-top: 0; border-bottom: 5px solid #fff; }
.combo { width: 149px; height: 21px; margin-left: -7px; background: #2a3038; border: 1px solid #1c2026; display: flex; align-items: center; justify-content: space-between; padding: 0 5px 0 2px; font-size: 12.500px; white-space: nowrap; }
.sep { width: 3px; height: 17px; margin: 0 14px 0 8px; border: 1px solid #6d747d; border-width: 0 1px; }
.title { font-size: 12px; letter-spacing: -.26px; white-space: nowrap; color: #eceef0; flex: 1; }
.win { display: flex; gap: 14px; padding-right: 6px; align-items: center; }

.menu { height: 27px; display: flex; align-items: center; padding-left: 2px; background: #333a45; font-size: 12px; letter-spacing: -.3px; }
.menu a { padding: 0 13px; color: #eef0f2; white-space: nowrap; height: 23px; line-height: 23px; margin-top: 2px; }
.menu a.on { color: #35a7e0; background: #46566a; border-radius: 3px 3px 0 0; margin: 2px 4px 0 3px; padding: 0; width: 134px; text-align: center; }
.collapse { width: 15px; height: 11px; margin-left: 6px; background: #f0f0f0; border: 1px solid #666; padding: 0; display: flex; align-items: center; justify-content: center; margin-top: -3px; }
.collapse i { width: 0; height: 0; border-left: 4px solid transparent; border-right: 4px solid transparent; border-bottom: 4px solid #222; }

.ribbon { height: 96px; flex: none; display: flex; padding-left: 2px; background: #343b46; gap: 1px; }
.rpanel { display: flex; flex-direction: column; }
.p1 { width: 325px; } .p2 { width: 236px; } .p3 { width: 274px; } .p4 { width: 334px; }
.rbody { height: 80px; flex: none; background: #46566a; display: flex; }
.rlabel { height: 16px; line-height: 16px; text-align: center; font-size: 12px; letter-spacing: -.2px; border-right: 1px solid #2a3038; }
.big { flex: none; display: flex; flex-direction: column; align-items: center; text-align: center; line-height: 13px; white-space: nowrap; padding-top: 6px; font-size: 11.500px; letter-spacing: -.2px; }
.big span { margin-top: 2.500px; }
.bi { display: block; height: 36px; }
.w1 { width: 96px; } .w2 { width: 114px; }
.w3 { width: 104px; }
.w4 { width: 102px; } .w5 { width: 112px; }
.w6 { width: 75px; } .w7 { width: 72px; } .w8 { width: 80px; }
.dd { display: inline-block; width: 0; height: 0; border-left: 2.500px solid transparent; border-right: 2.500px solid transparent; border-top: 3px solid #e6e9ec; vertical-align: middle; margin-left: 1px; }
.smalls { display: grid; grid-auto-rows: 22px; padding-top: 10px; align-items: center; justify-items: start; }
.cb { grid-template-columns: 33px 26px 25px 26px; margin-left: 3.500px; }
.c5 { grid-template-columns: repeat(5, 26px); margin-left: -3px; justify-items: center; }
.c2 { grid-template-columns: repeat(2, 26px); justify-items: center; }
.z { grid-template-columns: 24px 29px 24px 24px; margin-left: 4px; }
.s { width: 16px; height: 16px; display: block; }
.s.w { width: 20px; height: 16px; }
.abc { font: bold 6.500px "Liberation Sans", sans-serif; fill: #e6a94f; text-anchor: middle; }
.mini { font: 7px "Liberation Sans", sans-serif; fill: #e6a94f; text-anchor: middle; }
.rbtn { height: 96px; display: flex; flex-direction: column; align-items: center; background: linear-gradient(#46566a 0, #46566a 76%, #5e6f84 100%); line-height: 13px; font-size: 11.500px; letter-spacing: -.2px; }
.ni { width: 32px; height: 33px; margin: 6px 0 6px; flex: none; }
.ii { width: 32px; height: 30px; margin: 7px 0 8px; flex: none; }
.rbtn .dd { margin-top: 5px; }
.nar { width: 57px; margin-left: 2px; }
.iny { width: 40px; margin-left: 2px; }

.work { height: 562px; flex: none; display: flex; background: #2a2f37; padding-top: 1px; border-left: 2px solid #46566a; }
.left { width: 776px; flex: none; display: flex; flex-direction: column; }
.doctabs { height: 24px; display: flex; background: #2a2f37; font-size: 11px; flex: none; }
.down { width: 10px; background: #4b5664; display: flex; align-items: center; justify-content: center; margin-right: 2px; }
.down .tri { border-left-width: 4px; border-right-width: 4px; border-top-width: 7px; }
.dtab { width: 173px; display: flex; align-items: center; gap: 1px; padding-left: 5px; background: #3f4751; color: #8c939b; white-space: nowrap; }
.dtab.act { background: #4f6073; color: #fff; font-weight: 700; }
.fi { width: 14px; height: 14px; flex: none; }
.x { margin-left: auto; margin-right: 5px; }
.newtab { width: 29px; margin-left: 1px; background: #3f4751; display: flex; align-items: center; justify-content: center; }
.canvas { height: 417px; flex: none; background: #1f2933; }
.draw { display: block; }
.draw text { font-family: "Liberation Sans", sans-serif; }
.wl, .rd, .rdd, .mg, .gy, .cy, .fl { fill: none; stroke-width: 3; shape-rendering: crispEdges; }
.wl { stroke: #fff; }
.w2p { stroke-width: 6; }
.wf { fill: #fff; }
.rd { stroke: #f00; }
.rdd { stroke: #f00; shape-rendering: auto; }
.fr { stroke-width: 3.600; stroke-dasharray: 72 10 18 10; }
.mg { stroke: #f0f; }
.gy { stroke: #62686c; }
.cy { stroke: #0ff; }
.fl { stroke: #686d70; shape-rendering: auto; }
.gr circle { fill: #fff; stroke: #f00; stroke-width: 3; }
.cyt text { fill: #0ff; font-size: 29px; text-anchor: middle; }
.rg { fill: #5d6367; font-size: 40px; }
.big1 { fill: #fff; font-size: 38px; text-anchor: middle; }
.tw text { fill: #fff; font-size: 19px; stroke: #fff; stroke-width: .6px; }
.tw text.sm { font-size: 15px; }
.tw text.nt { font-size: 15px; }
.tw text.tiny { font-size: 11px; }
.dm text { fill: #fff; font-size: 21px; text-anchor: middle; stroke: #fff; stroke-width: .5px; }
.dm text.lv { font-size: 24px; }

.layouts { height: 20px; flex: none; display: flex; gap: 2px; background: #2a2f37; font-size: 11.500px; letter-spacing: -.2px; }
.lb, .lt { height: 15px; background: #3d4550; display: flex; align-items: center; justify-content: center; }
.lb { width: 14px; color: #8d949c; font-size: 9px; letter-spacing: -1px; }
.lb.up { width: 12px; margin-right: 2px; }
.lt { width: 61px; color: #d8dcdf; }
.lt.model { width: 57px; background: #54677d; color: #fff; font-weight: 700; }
.lt.plus { width: 30px; font-weight: 700; }

.cmd { height: 100px; flex: none; display: flex; background: #2c3037; }
.grip { width: 21px; background: #3d4550; display: flex; justify-content: center; padding-top: 4px; flex: none; }
.cmdmain { width: 732px; padding-left: 3px; display: flex; flex-direction: column; font: 13.300px/16px "DejaVu Sans Mono", monospace; color: #a9aeb3; }
.hist { margin: 0; height: 78px; padding-top: 2px; border-bottom: 1px solid #5a5f66; font: inherit; }
.prompt { display: flex; align-items: center; height: 21px; white-space: pre; }
.caret { width: 1px; height: 15px; background: #c8ccd0; margin-left: 2px; }
.cscroll { width: 18px; background: #3a3f48; display: flex; flex-direction: column; align-items: center; color: #7d858e; font-size: 11px; line-height: 10px; }
.cthumb { flex: 1; width: 14px; background: #4d5560; }
.cv { height: 14px; }

.panel { flex: none; background: #434d59; display: flex; flex-direction: column; height: 560px; border: 1px solid #2a2f37; overflow: hidden; }
.calc { width: 277px; margin-left: 2px; }
.props { width: 223px; margin-left: 3px; }
.ptitle { height: 24px; flex: none; background: #505c69; display: flex; align-items: center; justify-content: space-between; padding: 0 8px 0 17px; font: 700 14px "Liberation Sans", sans-serif; color: #f2f4f5; }
.ptitle svg { margin-top: -4px; }
.props .ptitle { padding-left: 11px; }
.cbody { flex: 1; display: flex; min-height: 0; }
.ccontent { width: 255px; padding: 10px 0 0 8px; flex: none; }
.tools { display: flex; gap: 6px; margin-left: 5px; }
.tools button, .ptop button { width: 20px; height: 20px; padding: 2px; background: transparent; border: 1px solid #8d9196; display: block; flex: none; }
.tools svg, .ptop svg { display: block; width: 100%; height: 100%; }
.area { width: 241px; height: 80px; margin-top: 15px; border: 1px solid #5c6268; }
.inp { width: 241px; height: 19px; margin-top: 5px; border: 1px solid #5c6268; }
h3 { margin: 12px 0 1px 3px; font: 700 14px/18px "Liberation Sans", sans-serif; color: #f2f4f5; white-space: nowrap; }
h3.gap { margin-top: 18px; }
h3.gap2 { margin-top: 11px; }
.keys { display: grid; grid-template-columns: repeat(5, 36px); gap: 7px 10px; margin-left: 10px; }
.keys button { height: 20px; padding: 0; background: transparent; border: 1px solid #8d9196; color: #e6e9ec; font: 12px "Noto Sans", sans-serif; line-height: 16px; }
.vscroll { width: 15px; flex: none; background: #3a404a; display: flex; flex-direction: column; align-items: center; }
.cs { margin-top: 30px; }
.ps { height: 409px; width: 14px; }
.ar { height: 18px; width: 100%; display: flex; align-items: center; justify-content: center; flex: none; }
.thumb { width: 13px; background: #525d69; flex: none; }
.cs .thumb { height: 221px; }
.ps .thumb { height: 243px; }
.fill { flex: 1; }

.ptop { display: flex; padding: 8px 8px 0 9px; height: 57px; flex: none; gap: 3px; }
.sel { width: 131px; height: 26px; margin-right: 4px; border-bottom: 1px solid #5c6672; display: flex; align-items: center; justify-content: space-between; padding: 0 4px; font-size: 11.500px; }
.ptop button { width: 21px; height: 21px; border-color: #5f6973; }
.pbody { flex: 1; display: flex; min-height: 0; }
.pcontent { width: 189px; margin-left: 8px; flex: none; padding-top: 6px; }
.ghead { height: 19px; display: flex; align-items: center; justify-content: space-between; padding: 0 5px; border-bottom: 1px solid #e6e9ec; font-weight: 700; font-size: 11.500px; width: 180px; }
.ghead.second { margin-top: 31px; }
.row { height: 25px; display: grid; grid-template-columns: 67px 1fr; border-bottom: 1px solid #566270; font-size: 11px; white-space: nowrap; width: 181px; }
.row span { padding: 7px 0 0 5px; border-right: 1px solid #566270; letter-spacing: .1px; }
.row em { font-style: normal; padding: 4px 0 0 4px; display: flex; align-items: flex-start; color: #d3d7db; line-height: 18px; }
.row.ro em { color: #8f969d; }
.swatch { width: 10px; height: 10px; background: #fff; border: 1px solid #111; margin: 4px 3px 0 0; flex: none; }
.ln { height: 1px; background: #fff; margin: 9px 4px 0 0; flex: none; }
.l1 { width: 45px; } .l2 { width: 40px; }

.status { height: 27px; flex: none; display: flex; align-items: center; background: #2f353f; padding-left: 11px; border-bottom: 1px solid #3f4b59; }
.coords { width: 249px; height: 22px; padding-left: 1px; font: 10px/22px "DejaVu Sans Mono", monospace; color: #d6d9dc; border-bottom: 1px solid #4a515b; flex: none; margin-top: 3px; }
.sicons { display: flex; align-items: center; margin-left: 7px; }
.st { width: 14px; height: 14px; margin-right: 10px; flex: none; }
.st.lw { margin-left: 8px; width: 12px; margin-right: 8px; }
.st.sm { margin: 0 8px 0 7px; width: 13px; }
.box { width: 20px; height: 21px; margin-right: 4px; border: 1px solid #52aef2; background: #3a5872; padding: 2px; display: block; flex: none; }
.box svg { display: block; width: 100%; height: 100%; }
.box.dark { background: #46515e; }
.sright { margin-left: auto; display: flex; align-items: center; width: 168px; color: #8f969d; }
.an { width: 15px; height: 15px; flex: none; }
.scale { font-size: 12px; margin: 0 3px 0 6px; letter-spacing: 1px; color: #8f969d; width: 19px; }
.sright .tri { border-left-width: 4.500px; border-right-width: 4.500px; }
.a2 { margin-left: 12px; } .a3 { margin-left: 7px; } .a4 { margin-left: 7px; } .a5 { margin-left: 7px; }
.rz { margin-left: 8px; align-self: flex-end; }
```
